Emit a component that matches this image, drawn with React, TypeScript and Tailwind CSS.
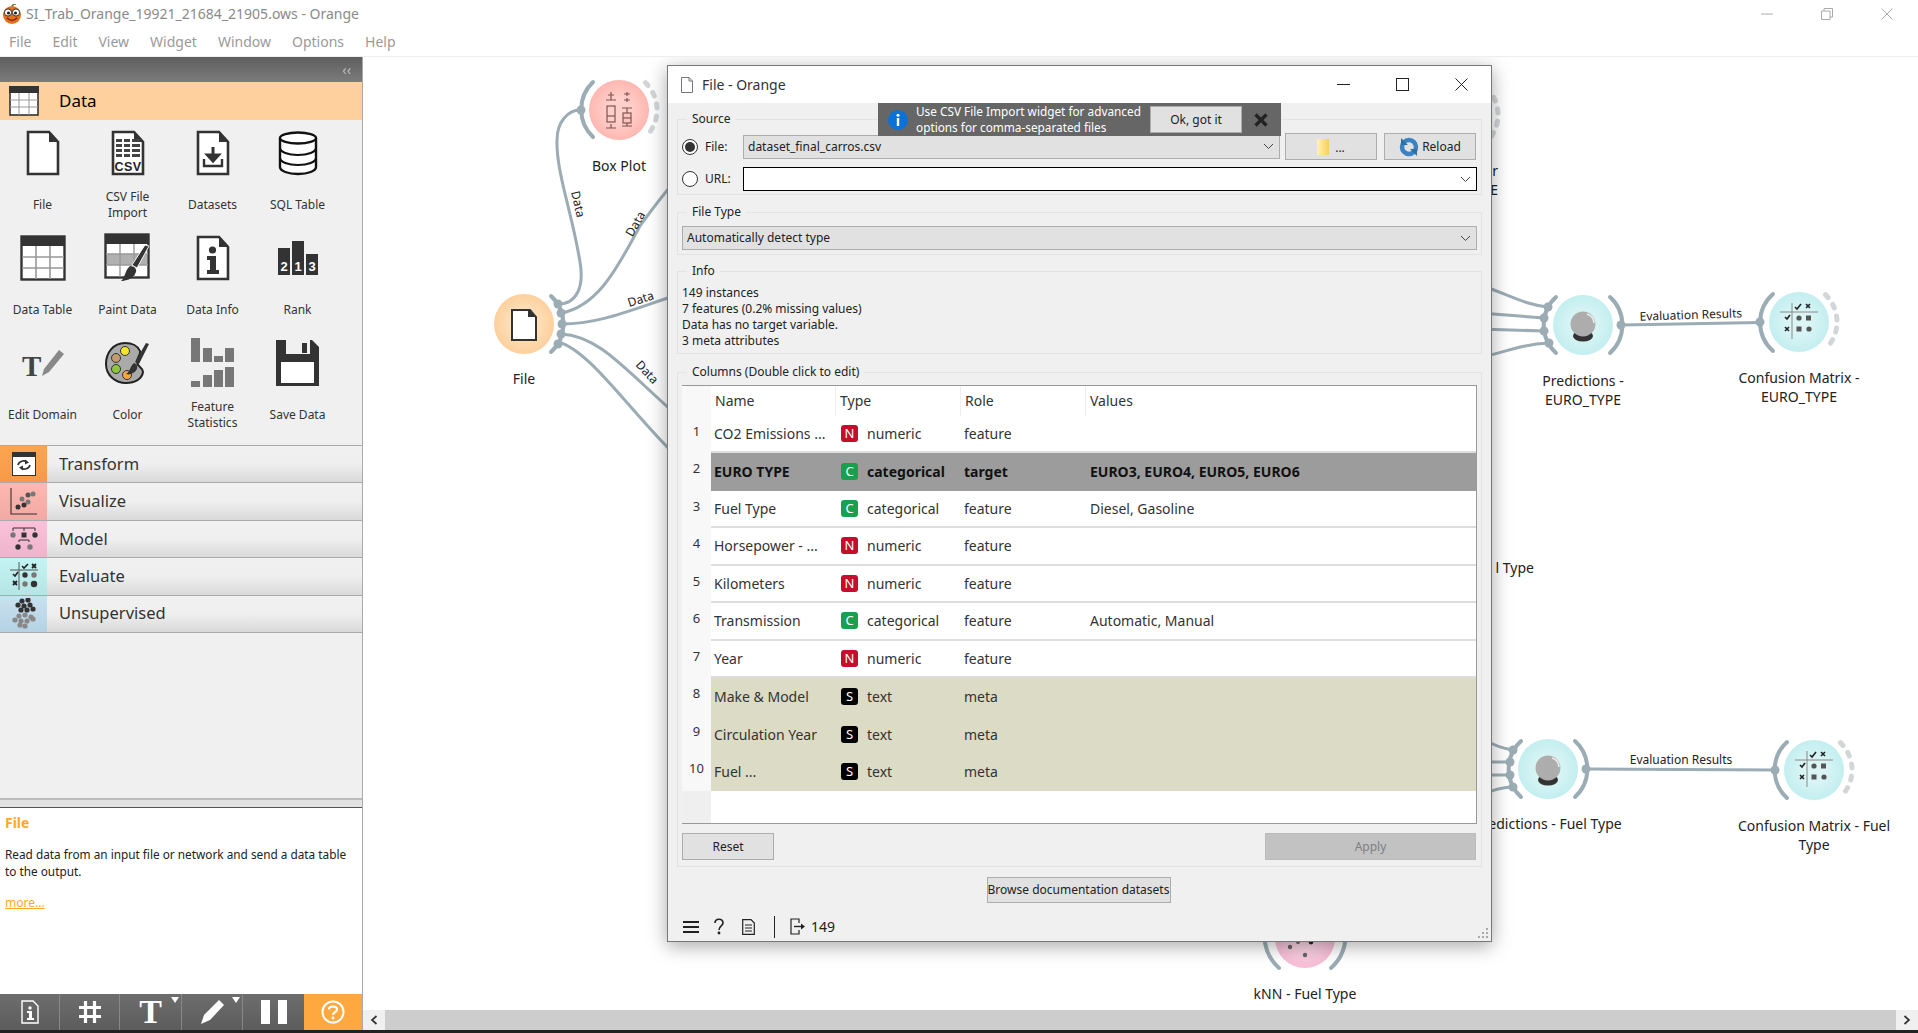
import React from "react";

const LINK = "#9bacb4";

function FileIcon() {
  return (
    <svg width="34" height="46" viewBox="0 0 34 46">
      <path d="M2 2H23L32 12V44H2Z" fill="#fff" stroke="#333" strokeWidth="2.6" />
      <path d="M23 2L32 12H23Z" fill="#333" />
    </svg>
  );
}
function CsvIcon() {
  return (
    <svg width="34" height="46" viewBox="0 0 34 46">
      <path d="M2 2H23L32 12V44H2Z" fill="#fff" stroke="#333" strokeWidth="2.6" />
      <path d="M23 2L32 12H23Z" fill="#333" />
      <g fill="#444">
        {[9, 14, 19, 24].map((y) => (
          <g key={y}>
            <rect x="5" y={y} width="6" height="3" />
            <rect x="13" y={y} width="6" height="3" />
            <rect x="21" y={y} width="8" height="3" />
          </g>
        ))}
      </g>
      <text x="17" y="41" textAnchor="middle" fontSize="12.5" fontWeight="700" fill="#222" fontFamily="Liberation Sans, sans-serif" letterSpacing="0.5">CSV</text>
    </svg>
  );
}
function DatasetsIcon() {
  return (
    <svg width="34" height="46" viewBox="0 0 34 46">
      <path d="M2 2H23L32 12V44H2Z" fill="#fff" stroke="#333" strokeWidth="2.6" />
      <path d="M23 2L32 12H23Z" fill="#333" />
      <path d="M17 17V29M11.5 25L17 31L22.5 25Z" stroke="#333" strokeWidth="3" fill="#333" />
      <path d="M8 29V36H26V29" stroke="#333" strokeWidth="2.4" fill="none" />
    </svg>
  );
}
function SqlIcon() {
  return (
    <svg width="40" height="46" viewBox="0 0 40 46">
      <path d="M2 8V37C2 41 10 44 20 44S38 41 38 37V8" fill="#fff" stroke="#111" strokeWidth="2.4" />
      <ellipse cx="20" cy="8" rx="18" ry="5.5" fill="#fff" stroke="#111" strokeWidth="2.4" />
      <path d="M2 18C2 22 10 25 20 25S38 22 38 18M2 28C2 32 10 35 20 35S38 32 38 28" fill="none" stroke="#111" strokeWidth="2.2" />
    </svg>
  );
}
function TableIcon() {
  return (
    <svg width="46" height="46" viewBox="0 0 46 46">
      <rect x="1.5" y="1.5" width="43" height="43" fill="#fff" stroke="#333" strokeWidth="2.4" />
      <rect x="1" y="1" width="44" height="10" fill="#333" />
      <path d="M16 11V44M30 11V44M2 22H44M2 33H44" stroke="#999" strokeWidth="1.6" />
    </svg>
  );
}
function PaintIcon() {
  return (
    <svg width="48" height="50" viewBox="0 0 48 50">
      <rect x="1.5" y="1.5" width="43" height="43" fill="#fff" stroke="#333" strokeWidth="2.4" />
      <rect x="1" y="1" width="44" height="10" fill="#333" />
      <rect x="3" y="21" width="40" height="11" fill="#b0b0b0" />
      <path d="M16 11V44M30 11V44M2 21H44M2 32H44" stroke="#999" strokeWidth="1.4" />
      <path d="M45 13L33 35L28 32L41 12Z" fill="#333" stroke="#f0f0f0" strokeWidth="1" />
      <path d="M26 33C31 33 34 37 31 41C28 46 22 48 17 48C21 45 21 37 26 33Z" fill="#333" />
    </svg>
  );
}
function InfoDocIcon() {
  return (
    <svg width="34" height="46" viewBox="0 0 34 46">
      <path d="M2 2H23L32 12V44H2Z" fill="#fff" stroke="#333" strokeWidth="2.6" />
      <path d="M23 2L32 12H23Z" fill="#333" />
      <circle cx="16.5" cy="15" r="3.6" fill="#333" />
      <path d="M11 21H20V35H23V39H11V35H14V25H11Z" fill="#333" />
    </svg>
  );
}
function RankIcon() {
  return (
    <svg width="42" height="34" viewBox="0 0 42 34">
      <rect x="1" y="7" width="12" height="27" fill="#333" />
      <rect x="15" y="0" width="12" height="34" fill="#333" />
      <rect x="29" y="13" width="12" height="21" fill="#333" />
      <g fill="#fff" fontSize="13" fontWeight="700" fontFamily="Liberation Sans, sans-serif" textAnchor="middle">
        <text x="7" y="30">2</text>
        <text x="21" y="30">1</text>
        <text x="35" y="30">3</text>
      </g>
    </svg>
  );
}
function EditDomainIcon() {
  return (
    <svg width="44" height="36" viewBox="0 0 44 36">
      <text x="1" y="31" fontSize="29" fontWeight="700" fill="#444" fontFamily="Liberation Serif, serif">T</text>
      <path d="M38 5L43 9L28 27L21 31L23 24Z" fill="#888" />
    </svg>
  );
}
function ColorIcon() {
  return (
    <svg width="46" height="44" viewBox="0 0 46 44">
      <path d="M20 2C8 2 1 12 1 23C1 35 11 42 21 42C30 42 37 38 38 31C38 26 32 26 32 21C32 16 36 14 35 10C33 5 27 2 20 2Z" fill="#aaa" stroke="#222" strokeWidth="2" />
      <circle cx="20" cy="10" r="4.5" fill="#f5e623" stroke="#333" />
      <circle cx="11" cy="17" r="4.5" fill="#c29a6b" stroke="#333" />
      <circle cx="11" cy="28" r="4.5" fill="#8cc63f" stroke="#333" />
      <circle cx="22" cy="34" r="4.5" fill="#f7a93f" stroke="#333" />
      <path d="M44 3L34 23L30 21L41 2Z" fill="#333" />
      <path d="M29 22C34 23 33 30 28 32C26 33 24 34 21 33C25 31 25 25 29 22Z" fill="#333" />
    </svg>
  );
}
function StatsIcon() {
  return (
    <svg width="44" height="50" viewBox="0 0 44 50" fill="#777">
      <rect x="0" y="0" width="9" height="24" />
      <rect x="12" y="10" width="9" height="14" />
      <rect x="23" y="18" width="9" height="6" />
      <rect x="34" y="10" width="9" height="14" />
      <rect x="0" y="43" width="9" height="6" />
      <rect x="12" y="37" width="9" height="12" />
      <rect x="23" y="32" width="9" height="17" />
      <rect x="34" y="29" width="9" height="20" />
    </svg>
  );
}
function SaveIcon() {
  return (
    <svg width="43" height="46" viewBox="0 0 43 46">
      <path d="M0 0H36L43 7V46H0Z" fill="#333" />
      <rect x="10" y="0" width="24" height="14" fill="#f0f0f0" />
      <rect x="26" y="3" width="5" height="10" fill="#333" />
      <rect x="5" y="22" width="33" height="21" fill="#fff" />
    </svg>
  );
}

const widgets: { label: string; lines?: string[]; icon: React.ReactNode }[] = [
  { label: "File", icon: <FileIcon /> },
  { label: "CSV File Import", lines: ["CSV File", "Import"], icon: <CsvIcon /> },
  { label: "Datasets", icon: <DatasetsIcon /> },
  { label: "SQL Table", icon: <SqlIcon /> },
  { label: "Data Table", icon: <TableIcon /> },
  { label: "Paint Data", icon: <PaintIcon /> },
  { label: "Data Info", icon: <InfoDocIcon /> },
  { label: "Rank", icon: <RankIcon /> },
  { label: "Edit Domain", icon: <EditDomainIcon /> },
  { label: "Color", icon: <ColorIcon /> },
  { label: "Feature Statistics", lines: ["Feature", "Statistics"], icon: <StatsIcon /> },
  { label: "Save Data", icon: <SaveIcon /> },
];

function TransformIcon() {
  return (
    <svg width="24" height="24" viewBox="0 0 24 24">
      <rect x="0.5" y="0.5" width="23" height="23" fill="#fff" stroke="#333" />
      <rect x="0" y="0" width="24" height="5" fill="#333" />
      <path d="M6 13C7 9 12 8 15 10M18 13C17 17 12 18 9 16" fill="none" stroke="#333" strokeWidth="1.7" />
      <path d="M13 7.5L17 10.5L13 12.5ZM11 13.5L7 15.5L11 18.5Z" fill="#333" />
    </svg>
  );
}
function VisualizeIcon() {
  return (
    <svg width="28" height="30" viewBox="0 0 28 30">
      <path d="M1 1V27H27" fill="none" stroke="#333" strokeWidth="1.1" />
      <g fill="#333">
        <circle cx="8" cy="20" r="2.5" />
        <circle cx="14" cy="18" r="2.5" />
      </g>
      <g fill="#777">
        <circle cx="12" cy="12" r="2.5" />
        <circle cx="18" cy="15" r="2.5" />
      </g>
      <circle cx="18" cy="8" r="2.5" fill="#555" />
      <circle cx="23" cy="7" r="2.5" fill="#777" />
    </svg>
  );
}
function ModelIcon() {
  return (
    <svg width="30" height="26" viewBox="0 0 30 26">
      <path d="M4 5V2H26V5M15 2V5M10 16V14H20V16" fill="none" stroke="#333" strokeWidth="1" />
      <circle cx="4" cy="9" r="2.7" fill="#777" />
      <rect x="12.5" y="6.5" width="5" height="5" fill="#333" />
      <circle cx="26" cy="9" r="2.7" fill="#333" />
      <circle cx="9" cy="21" r="2.7" fill="#333" />
      <circle cx="21" cy="21" r="2.7" fill="#777" />
    </svg>
  );
}
function EvaluateIcon({ size = 28 }: { size?: number }) {
  return (
    <svg width={size} height={size} viewBox="0 0 28 28">
      <path d="M0 8H28M9 0V28" stroke="#555" strokeWidth="1" fill="none" />
      <path d="M12 4L14 6L18 2M3 12L5 14L8 10" stroke="#222" strokeWidth="1.6" fill="none" />
      <path d="M22 2L26 6M26 2L22 6M3 19L7 23M7 19L3 23" stroke="#222" strokeWidth="1.8" fill="none" />
      <circle cx="15" cy="13" r="2.7" fill="#333" />
      <circle cx="24" cy="13" r="2.7" fill="#777" />
      <circle cx="15" cy="22" r="2.7" fill="#777" />
      <circle cx="24" cy="22" r="3.2" fill="#333" />
    </svg>
  );
}
function UnsupervisedIcon() {
  const dark = [[11, 3], [17, 2], [7, 7], [13, 8], [19, 7], [10, 12], [16, 12], [22, 11]];
  const grey = [[8, 18], [14, 17], [20, 19], [4, 22], [10, 23], [16, 23], [22, 21], [9, 27], [14, 28]];
  return (
    <svg width="26" height="31" viewBox="0 0 26 31">
      {dark.map(([x, y], i) => <circle key={i} cx={x} cy={y} r="2.6" fill="#333" />)}
      {grey.map(([x, y], i) => <circle key={i} cx={x} cy={y} r="2.6" fill="#888" />)}
    </svg>
  );
}

const categories = [
  { name: "Transform", bg: "bg-gradient-to-b from-[#fba452] to-[#f79a48]", icon: <TransformIcon /> },
  { name: "Visualize", bg: "bg-gradient-to-b from-[#ffb7b1] to-[#f0a9a3]", icon: <VisualizeIcon /> },
  { name: "Model", bg: "bg-gradient-to-b from-[#fac1d9] to-[#efb4cc]", icon: <ModelIcon /> },
  { name: "Evaluate", bg: "bg-gradient-to-b from-[#c3f3f3] to-[#b6e5e5]", icon: <EvaluateIcon /> },
  { name: "Unsupervised", bg: "bg-gradient-to-b from-[#cae1ef] to-[#b4d2e4]", icon: <UnsupervisedIcon /> },
];

function Sidebar() {
  return (
    <aside className="w-[363px] shrink-0 flex flex-col bg-[#f0f0f0] border-r border-[#aaaaaa]">
      <div className="h-[25px] shrink-0 flex items-center justify-end pr-[11px] bg-gradient-to-b from-[#5e5e5e] to-[#7c7c7c] text-[#bbbbbb] text-[14px] leading-none">
        ‹‹
      </div>
      <div className="h-[38px] shrink-0 flex items-center bg-[#fdd09d]">
        <div className="w-[59px] flex justify-start pl-[9px]">
          <svg width="30" height="30" viewBox="0 0 30 30">
            <rect x="1" y="1" width="28" height="28" fill="#fff" stroke="#333" strokeWidth="1.6" />
            <rect x="0" y="0" width="30" height="7" fill="#333" />
            <path d="M10 7V29M20 7V29M1 14H29M1 21H29" stroke="#999" strokeWidth="1" />
          </svg>
        </div>
        <span className="text-[17px] text-black">Data</span>
      </div>
      <div className="h-[325px] shrink-0 grid grid-cols-[85px_85px_85px_85px] grid-rows-[105px_105px_105px] pt-[5px]">
        {widgets.map((w) => (
          <div key={w.label} className="flex flex-col items-center">
            <div className="h-[56px] flex items-center justify-center">{w.icon}</div>
            <div className="mt-[1px] h-[46px] flex flex-col items-center justify-center text-[12px] leading-[16px] text-[#333333]">
              {(w.lines ?? [w.label]).map((l) => <span key={l}>{l}</span>)}
            </div>
          </div>
        ))}
      </div>
      <div className="shrink-0 border-t border-[#aaaaaa]">
        {categories.map((c) => (
          <div key={c.name} className="h-[37.4px] flex border-b border-[#aaaaaa] bg-gradient-to-b from-[#f1f1f1] via-[#efefef] to-[#d9d9d9]">
            <div className={`w-[47px] flex items-center justify-center ${c.bg}`}>{c.icon}</div>
            <span className="pl-[12px] self-center text-[16.5px] text-[#333333]">{c.name}</span>
          </div>
        ))}
      </div>
      <div className="flex-1" />
      <div className="h-[10px] shrink-0 border-t-2 border-[#bbbbbb] bg-[#e2e2e2] border-b border-b-[#555555]" />
      <div className="h-[186px] shrink-0 bg-white px-[5px] pt-[4px]">
        <div className="text-[14px] leading-[22px] font-bold text-[#ffa826]">File</div>
        <p className="mt-[12px] text-[11.8px] leading-[17px] text-[#222222] whitespace-nowrap">
          Read data from an input file or network and send a data table<br />to the output.
        </p>
        <div className="mt-[14px] text-[12px] leading-[17px] text-[#ffa826] underline">more...</div>
      </div>
      <div className="h-[36px] shrink-0 flex bg-gradient-to-b from-[#6e6e6e] to-[#5c5c5c]">
        <div className="w-[60px] flex items-center justify-center border-r border-[#888888]">
          <svg width="18" height="24" viewBox="0 0 18 24">
            <path d="M1 1H12L17 6V23H1Z" fill="none" stroke="#fff" strokeWidth="1.4" />
            <circle cx="9" cy="8" r="1.7" fill="#fff" />
            <path d="M6 11H11V18H13V20H6V18H8V13H6Z" fill="#fff" />
          </svg>
        </div>
        <div className="w-[60px] flex items-center justify-center border-r border-[#888888]">
          <svg width="24" height="24" viewBox="0 0 24 24">
            <path d="M7.5 1V23M16.5 1V23M1 7.5H23M1 16.5H23" stroke="#fff" strokeWidth="3.2" />
          </svg>
        </div>
        <div className="w-[62px] relative flex items-center justify-center border-r border-[#888888]">
          <span className="text-[34px] leading-none font-bold text-white font-['Liberation_Serif',serif]">T</span>
          <span className="absolute right-[2px] top-[3px] w-0 h-0 border-x-[4px] border-x-transparent border-t-[6px] border-t-white" />
        </div>
        <div className="w-[61px] relative flex items-center justify-center border-r border-[#888888]">
          <svg width="24" height="26" viewBox="0 0 24 26">
            <path d="M19 1L24 6L10 21L1 25L4 16Z" fill="#fff" />
          </svg>
          <span className="absolute right-[2px] top-[3px] w-0 h-0 border-x-[4px] border-x-transparent border-t-[6px] border-t-white" />
        </div>
        <div className="w-[61px] flex items-center justify-center gap-[8px]">
          <span className="w-[9px] h-[24px] bg-white" />
          <span className="w-[9px] h-[24px] bg-white" />
        </div>
        <div className="flex-1 flex items-center justify-center bg-[#ffa840]">
          <svg width="24" height="24" viewBox="0 0 24 24">
            <circle cx="12" cy="12" r="10.5" fill="none" stroke="#fff" strokeWidth="2" />
            <path d="M8 9.5C8 5.5 16 5.5 16 9.5C16 12 12 12 12 15" fill="none" stroke="#fff" strokeWidth="2.2" />
            <circle cx="12" cy="18" r="1.4" fill="#fff" />
          </svg>
        </div>
      </div>
    </aside>
  );
}

function Arc({ d }: { d: string }) {
  return <path d={d} fill="none" stroke={LINK} strokeWidth="4" strokeLinecap="round" />;
}
function Dot({ x, y, r = 4.5 }: { x: number; y: number; r?: number }) {
  return <circle cx={x} cy={y} r={r} fill={LINK} />;
}
function DashedOut({ cx, cy }: { cx: number; cy: number }) {
  const a = (46 * Math.PI) / 180;
  const r = 38;
  const dx = r * Math.cos(a);
  const dy = r * Math.sin(a);
  return (
    <path
      d={`M${cx + dx} ${cy - dy}A${r} ${r} 0 0 1 ${cx + dx} ${cy + dy}`}
      fill="none"
      stroke="#d3d6d8"
      strokeWidth="5"
      strokeLinecap="round"
      strokeDasharray="4 8.2"
    />
  );
}
function CrystalBall({ cx, cy }: { cx: number; cy: number }) {
  return (
    <g>
      <ellipse cx={cx} cy={cy + 11} rx="10" ry="5.5" fill="#333" />
      <circle cx={cx} cy={cy - 1} r="12.5" fill="#adadad" />
      <path d={`M${cx + 4} ${cy - 11}A10 10 0 0 1 ${cx + 11} ${cy - 2}`} fill="none" stroke="#eee" strokeWidth="1.5" />
    </g>
  );
}
function MatrixGlyph({ cx, cy }: { cx: number; cy: number }) {
  return (
    <g transform={`translate(${cx - 19} ${cy - 19})`}>
      <path d="M0 9H38M12 0V36" stroke="#888" strokeWidth="1" fill="none" />
      <path d="M15 4L17 6L21 1M5 14L7 16L10 12" stroke="#222" strokeWidth="1.6" fill="none" />
      <path d="M26 1L30 5M30 1L26 5M5 24L9 28M9 24L5 28" stroke="#222" strokeWidth="1.6" fill="none" />
      <circle cx="19" cy="15" r="2.6" fill="#555" />
      <rect x="26" y="12.5" width="5" height="5" fill="#555" />
      <rect x="16.5" y="23.5" width="5" height="5" fill="#555" />
      <circle cx="29" cy="26" r="2.6" fill="#555" />
    </g>
  );
}

function CanvasDrawing() {
  return (
    <svg className="absolute left-0 top-0" width="1555" height="953" viewBox="363 57 1555 953">
      <defs>
        <radialGradient id="gOrange"><stop offset="35%" stopColor="#ffe2bf" /><stop offset="100%" stopColor="#fdd09d" /></radialGradient>
        <radialGradient id="gRed"><stop offset="35%" stopColor="#ffd0cb" /><stop offset="100%" stopColor="#ffb7b1" /></radialGradient>
        <radialGradient id="gPink"><stop offset="35%" stopColor="#fbd4e4" /><stop offset="100%" stopColor="#f8bdd6" /></radialGradient>
        <radialGradient id="gTeal"><stop offset="35%" stopColor="#dbf5f5" /><stop offset="100%" stopColor="#c3eef0" /></radialGradient>
      </defs>
      <g fill="none" stroke={LINK} strokeWidth="3">
        <path d="M558 304C578 304 584 285 580 262C572 212 556 172 557 140C557 122 568 110 580 110" />
        <path d="M561 313C600 306 620 262 640 226C650 212 660 198 680 175" />
        <path d="M562 324C600 324 630 310 680 294" />
        <path d="M561 334C600 336 625 370 680 418" />
        <path d="M558 342C590 350 630 412 680 460" />
        <path d="M1480 285C1510 295 1525 305 1548 307" />
        <path d="M1480 313L1544 318" />
        <path d="M1480 329L1544 331" />
        <path d="M1480 358C1510 350 1525 344 1549 343" />
        <path d="M1622 325L1760 322.5" />
        <path d="M1480 738C1495 746 1505 749 1513 750" />
        <path d="M1480 762L1510 762" />
        <path d="M1480 775L1510 775" />
        <path d="M1480 795C1495 789 1505 787 1513 787" />
        <path d="M1587 769L1775 770" />
      </g>

      <circle cx="524" cy="324" r="30" fill="url(#gOrange)" />
      <path d="M513 310H531L537 317V340H513Z" transform="translate(-1 0)" fill="#fff" stroke="#333" strokeWidth="2" />
      <path d="M529 309L537 317H529Z" transform="translate(-1 0)" fill="#333" />
      <Arc d="M551 296A38 38 0 0 1 551 352" />
      <Dot x={558} y={304} /><Dot x={561} y={313} /><Dot x={562} y={324} /><Dot x={561} y={334} /><Dot x={558} y={344} />

      <circle cx="619" cy="110" r="30" fill="url(#gRed)" />
      <g stroke="#7f5550" strokeWidth="1.2" fill="none">
        <path d="M611 92V100M608 95H614M606 100H616M606 128H616M611 124V128" />
        <rect x="607" y="106" width="8" height="16" />
        <path d="M607 116H615" />
        <path d="M627 92V96M624 94H630M627 98V102M624 100H630M622 108H632M622 126H632M627 108V126" />
        <rect x="623" y="113" width="8" height="10" fill="#ffc4bf" />
        <path d="M623 118H631" />
      </g>
      <Arc d="M593 82A38 38 0 0 0 593 137" />
      <Dot x={581} y={110} />
      <DashedOut cx={619} cy={110} />

      <DashedOut cx={1460} cy={115} />

      <circle cx="1305" cy="938" r="30" fill="url(#gPink)" />
      <g fill="#666"><circle cx="1290" cy="947" r="2.2" /><circle cx="1305" cy="955" r="2.2" /><circle cx="1298" cy="942" r="2" /></g>
      <circle cx="1311" cy="942" r="2.4" fill="#222" />
      <Arc d="M1279 968A42 42 0 0 1 1265 930" />
      <Arc d="M1331 968A42 42 0 0 0 1345 930" />

      <circle cx="1583" cy="325" r="30" fill="url(#gTeal)" />
      <CrystalBall cx={1583} cy={325} />
      <Arc d="M1556 297A38 38 0 0 0 1556 353" />
      <Arc d="M1610 297A38 38 0 0 1 1610 353" />
      <Dot x={1548} y={307} /><Dot x={1544} y={318} /><Dot x={1544} y={331} /><Dot x={1549} y={343} /><Dot x={1621} y={325} />

      <circle cx="1799" cy="322" r="30" fill="url(#gTeal)" />
      <MatrixGlyph cx={1799} cy={322} />
      <Arc d="M1773 294A38 38 0 0 0 1773 351" />
      <Dot x={1760} y={322} />
      <DashedOut cx={1799} cy={322} />

      <circle cx="1548" cy="769" r="30" fill="url(#gTeal)" />
      <CrystalBall cx={1548} cy={769} />
      <Arc d="M1521 741A38 38 0 0 0 1521 797" />
      <Arc d="M1575 741A38 38 0 0 1 1575 797" />
      <Dot x={1513} y={750} /><Dot x={1510} y={762} /><Dot x={1510} y={775} /><Dot x={1513} y={787} /><Dot x={1586} y={769} />

      <circle cx="1814" cy="770" r="30" fill="url(#gTeal)" />
      <MatrixGlyph cx={1814} cy={770} />
      <Arc d="M1787 742A38 38 0 0 0 1787 798" />
      <Dot x={1775} y={770} />
      <DashedOut cx={1814} cy={770} />

      <g fontSize="12" fill="#222" textAnchor="middle" fontFamily="Noto Sans, sans-serif">
        <text transform="translate(574 205) rotate(77)">Data</text>
        <text transform="translate(639 226) rotate(-60)">Data</text>
        <text transform="translate(642 303) rotate(-18)">Data</text>
        <text transform="translate(644 375) rotate(47)">Data</text>
        <text transform="translate(1691 319) rotate(-2)">Evaluation Results</text>
        <text x="1681" y="764">Evaluation Results</text>
      </g>
    </svg>
  );
}

function NodeLabels() {
  return (
    <div className="text-[14px] leading-[19px] text-[#222222] text-center">
      <div className="absolute left-[111px] top-[312px] w-[100px]">File</div>
      <div className="absolute left-[206px] top-[99px] w-[100px]">Box Plot</div>
      <div className="absolute left-[1100px] top-[104px] w-[35px] text-right whitespace-nowrap">er<br />E</div>
      <div className="absolute left-[1100px] top-[501px] w-[71px] text-right whitespace-nowrap">l Type</div>
      <div className="absolute left-[1150px] top-[314px] w-[140px]">Predictions -<br />EURO_TYPE</div>
      <div className="absolute left-[1366px] top-[311px] w-[140px]">Confusion Matrix -<br />EURO_TYPE</div>
      <div className="absolute left-[1065px] top-[757px] w-[240px]">Predictions - Fuel Type</div>
      <div className="absolute left-[1371px] top-[759px] w-[160px]">Confusion Matrix - Fuel<br />Type</div>
      <div className="absolute left-[842px] top-[927px] w-[200px]">kNN - Fuel Type</div>
    </div>
  );
}

function Chevron() {
  return (
    <svg width="11" height="7" viewBox="0 0 11 7">
      <path d="M1 1L5.5 5.5L10 1" fill="none" stroke="#444" strokeWidth="1" />
    </svg>
  );
}

function Group({ title, className, children }: { title: string; className?: string; children?: React.ReactNode }) {
  return (
    <div className={`relative border border-[#e3e3e3] px-[4px] ${className ?? ""}`}>
      <span className="absolute left-[9px] -top-[9px] px-[5px] bg-[#f0f0f0] text-[12px] leading-[16px] text-[#222222]">{title}</span>
      {children}
    </div>
  );
}

function Radio({ on, label }: { on?: boolean; label: string }) {
  return (
    <div className="w-[61px] flex items-center gap-[7px] shrink-0">
      <span className="w-[16px] h-[16px] rounded-full border border-[#333333] bg-white flex items-center justify-center">
        {on && <span className="w-[10px] h-[10px] rounded-full bg-[#333333]" />}
      </span>
      <span className="text-[12px] text-[#222222]">{label}</span>
    </div>
  );
}

const btn = "border border-[#adadad] bg-[#e1e1e1] flex items-center justify-center text-[12px] text-[#222222]";

const columns: { n: number; name: string; type: "N" | "C" | "S"; t: string; role: string; values?: string; kind?: "target" | "meta" }[] = [
  { n: 1, name: "CO2 Emissions ...", type: "N", t: "numeric", role: "feature" },
  { n: 2, name: "EURO TYPE", type: "C", t: "categorical", role: "target", values: "EURO3, EURO4, EURO5, EURO6", kind: "target" },
  { n: 3, name: "Fuel Type", type: "C", t: "categorical", role: "feature", values: "Diesel, Gasoline" },
  { n: 4, name: "Horsepower - ...", type: "N", t: "numeric", role: "feature" },
  { n: 5, name: "Kilometers", type: "N", t: "numeric", role: "feature" },
  { n: 6, name: "Transmission", type: "C", t: "categorical", role: "feature", values: "Automatic, Manual" },
  { n: 7, name: "Year", type: "N", t: "numeric", role: "feature" },
  { n: 8, name: "Make & Model", type: "S", t: "text", role: "meta", kind: "meta" },
  { n: 9, name: "Circulation Year", type: "S", t: "text", role: "meta", kind: "meta" },
  { n: 10, name: "Fuel ...", type: "S", t: "text", role: "meta", kind: "meta" },
];

const badgeBg = { N: "bg-[#c90b2e]", C: "bg-[#1c9e4f]", S: "bg-black" };

function ColumnsTable() {
  return (
    <div className="h-[439px] border border-[#999999] border-l-0 border-t-[#999999] bg-white flex flex-col text-[14px] text-[#333333]">
      <div className="h-[29.5px] shrink-0 flex">
        <div className="w-[29px] bg-[#f8f8f8]" />
        {["Name", "Type", "Role"].map((h) => (
          <div key={h} className="w-[125px] pl-[4px] flex items-center border-r border-[#eeeeee]">{h}</div>
        ))}
        <div className="flex-1 pl-[4px] flex items-center">Values</div>
      </div>
      {columns.map((c) => {
        const target = c.kind === "target";
        const meta = c.kind === "meta";
        const rowBg = target ? "bg-[#9c9c9c] font-bold text-[#111111]" : meta ? "bg-[#dcdbc5]" : "border-b-2 border-[#dddddd]";
        return (
          <div key={c.n} className="h-[37.5px] shrink-0 flex">
            <div className="w-[29px] shrink-0 bg-[#f8f8f8] text-center pt-[5px] text-[13px] leading-[20px] font-normal text-[#333333]">{c.n}</div>
            <div className={`flex-1 flex items-center ${rowBg}`}>
              <div className="w-[125px] pl-[3px] whitespace-nowrap">{c.name}</div>
              <div className="w-[125px] pl-[5px] flex items-center gap-[9px]">
                <span className={`w-[17px] h-[17px] rounded-[3px] flex items-center justify-center text-[13px] font-normal text-white ${badgeBg[c.type]}`}>{c.type}</span>
                <span>{c.t}</span>
              </div>
              <div className="w-[125px] pl-[3px]">{c.role}</div>
              <div className="flex-1 pl-[4px]">{c.values}</div>
            </div>
          </div>
        );
      })}
      <div className="flex-1 flex">
        <div className="w-[29px] bg-[#efefef]" />
      </div>
    </div>
  );
}

function Dialog() {
  return (
    <div className="absolute left-[304px] top-[8px] w-[825px] h-[877px] flex flex-col bg-[#f0f0f0] border border-[#777777] shadow-[0_4px_18px_rgba(0,0,0,0.35)]">
      <div className="h-[37px] shrink-0 bg-white flex items-center pl-[13px]">
        <svg width="12" height="16" viewBox="0 0 12 16">
          <path d="M0.5 0.5H8L11.5 4V15.5H0.5Z" fill="#fff" stroke="#777" />
          <path d="M8 0.5V4H11.5" fill="none" stroke="#777" />
        </svg>
        <span className="ml-[9px] text-[14px] text-[#333333]">File - Orange</span>
        <div className="ml-auto flex items-center pr-[23px] gap-[46px]">
          <svg width="13" height="13" viewBox="0 0 13 13"><path d="M0 6.5H13" stroke="#222" strokeWidth="1" /></svg>
          <svg width="13" height="13" viewBox="0 0 13 13"><rect x="0.5" y="0.5" width="12" height="12" fill="none" stroke="#222" /></svg>
          <svg width="13" height="13" viewBox="0 0 13 13"><path d="M0.5 0.5L12.5 12.5M12.5 0.5L0.5 12.5" stroke="#222" strokeWidth="1" /></svg>
        </div>
      </div>

      <div className="absolute left-[210px] top-[37px] w-[403px] h-[33px] bg-[#666666] flex items-center z-10">
        <svg className="ml-[10px]" width="20" height="20" viewBox="0 0 20 20">
          <circle cx="10" cy="10" r="10" fill="#0a72d6" />
          <circle cx="10" cy="5.2" r="1.5" fill="#fff" />
          <rect x="8.8" y="8" width="2.4" height="8" fill="#fff" />
        </svg>
        <div className="ml-[8px] w-[232px] pb-[2px] text-[11.8px] leading-[16px] text-white whitespace-nowrap">
          Use CSV File Import widget for advanced<br />options for comma-separated files
        </div>
        <div className={`${btn} w-[92px] h-[27px] ml-[2px]`}>Ok, got it</div>
        <svg className="ml-[12px]" width="14" height="14" viewBox="0 0 14 14">
          <path d="M1.5 1.5L12.5 12.5M12.5 1.5L1.5 12.5" stroke="#222" strokeWidth="3.2" />
        </svg>
      </div>

      <div className="flex-1 flex flex-col px-[9px] pt-[16px]">
        <Group title="Source" className="h-[76px] pt-[13px]">
          <div className="flex items-center h-[27px] pr-0">
            <Radio on label="File:" />
            <div className="w-[537px] h-[24px] border border-[#adadad] bg-[#e1e1e1] flex items-center justify-between pl-[4px] pr-[5px] text-[12px] text-[#222222]">
              dataset_final_carros.csv <Chevron />
            </div>
            <div className={`${btn} ml-[5px] w-[92px] h-[27px] gap-[6px]`}>
              <span className="w-[12px] h-[16px] bg-gradient-to-r from-[#fff3b0] to-[#f6cf5a]" />
              <span className="mt-[3px]">...</span>
            </div>
            <div className={`${btn} ml-[7px] w-[92px] h-[27px] gap-[3px]`}>
              <svg width="20" height="20" viewBox="0 0 20 20">
                <circle cx="10" cy="10" r="7" fill="none" stroke="#3b82c4" strokeWidth="4.5" />
                <path d="M2 1V8H9ZM18 19V12H11Z" fill="#2f6fa8" />
              </svg>
              Reload
            </div>
          </div>
          <div className="flex items-center mt-[7px]">
            <Radio label="URL:" />
            <div className="flex-1 h-[24px] border border-black bg-white flex items-center justify-end pr-[5px]"><Chevron /></div>
          </div>
        </Group>

        <Group title="File Type" className="h-[43px] mt-[17px] pt-[13px]">
          <div className="h-[24px] border border-[#adadad] bg-[#e1e1e1] flex items-center justify-between pl-[4px] pr-[5px] text-[12px] text-[#222222]">
            Automatically detect type <Chevron />
          </div>
        </Group>

        <Group title="Info" className="h-[83px] mt-[16px] pt-[13px] text-[12px] leading-[16px] text-[#222222]">
          <div>149 instances</div>
          <div>7 features (0.2% missing values)</div>
          <div>Data has no target variable.</div>
          <div>3 meta attributes</div>
        </Group>

        <Group title="Columns (Double click to edit)" className="h-[495px] mt-[18px] pt-[12px]">
          <ColumnsTable />
          <div className="mt-[9px] flex justify-between pr-[1px]">
            <div className={`${btn} w-[92px] h-[27px]`}>Reset</div>
            <div className="w-[211px] h-[27px] bg-[#c2c2c2] border border-[#bbbbbb] flex items-center justify-center text-[12px] text-[#7f7f7f]">Apply</div>
          </div>
        </Group>

        <div className="mt-[10px] flex justify-center">
          <div className={`${btn} w-[184px] h-[26px] text-[11.6px] -translate-x-[1px]`}>Browse documentation datasets</div>
        </div>
      </div>

      <div className="h-[26px] shrink-0 flex items-center pl-[15px] pb-[3px] relative text-[14px] text-[#222222]">
        <svg width="17" height="14" viewBox="0 0 17 14"><path d="M0 2H16M0 7H16M0 12H16" stroke="#222" strokeWidth="2.2" /></svg>
        <svg className="ml-[14px]" width="10" height="17" viewBox="0 0 10 17">
          <path d="M1 5C1 0 9 0 9 5C9 8 5 8 5 12" fill="none" stroke="#222" strokeWidth="1.6" />
          <circle cx="5" cy="15" r="1.4" fill="#222" />
        </svg>
        <svg className="ml-[18px]" width="13" height="16" viewBox="0 0 13 16">
          <path d="M0.7 0.7H9L12.3 4V15.3H0.7Z" fill="none" stroke="#222" strokeWidth="1.2" />
          <path d="M3 6H10M3 9H10M3 12H10" stroke="#222" />
        </svg>
        <span className="ml-[19px] w-px h-[22px] bg-[#222222]" />
        <svg className="ml-[15px]" width="16" height="17" viewBox="0 0 16 17">
          <path d="M9 5V1H1V16H9V12" fill="none" stroke="#222" strokeWidth="1.2" />
          <path d="M4 8.5H11" stroke="#222" strokeWidth="1.4" />
          <path d="M11 5.5L15 8.5L11 11.5Z" fill="#222" />
        </svg>
        <span className="ml-[5px]">149</span>
        <svg className="absolute right-[2px] bottom-[2px]" width="12" height="12" viewBox="0 0 12 12" fill="#aaa">
          <rect x="9" y="1" width="2" height="2" /><rect x="5" y="5" width="2" height="2" /><rect x="9" y="5" width="2" height="2" />
          <rect x="1" y="9" width="2" height="2" /><rect x="5" y="9" width="2" height="2" /><rect x="9" y="9" width="2" height="2" />
        </svg>
      </div>
    </div>
  );
}

export default function App() {
  return (
    <div className="w-screen h-screen overflow-hidden flex flex-col bg-white font-['Noto_Sans','Liberation_Sans',sans-serif]">
      <div className="h-[27px] shrink-0 flex items-center pl-[1px]">
        <svg width="22" height="20" viewBox="0 0 22 20">
          <circle cx="11" cy="11" r="9" fill="#e2701c" />
          <path d="M11 2L13 0H15" stroke="#5a7a1e" strokeWidth="1.5" fill="none" />
          <circle cx="7" cy="8.5" r="3.6" fill="#fff" stroke="#333" />
          <circle cx="15" cy="8.5" r="3.6" fill="#fff" stroke="#333" />
          <circle cx="7.5" cy="9" r="1.6" fill="#222" />
          <circle cx="14.5" cy="9" r="1.6" fill="#222" />
          <path d="M6 14C9 17 13 17 16 14" stroke="#7a1e10" strokeWidth="1.6" fill="none" />
        </svg>
        <span className="ml-[3px] text-[14px] text-[#8a8a8a]">SI_Trab_Orange_19921_21684_21905.ows - Orange</span>
        <div className="ml-auto flex items-center gap-[48px] pr-[25px]">
          <svg width="12" height="12" viewBox="0 0 12 12"><path d="M0 6H12" stroke="#aaa" /></svg>
          <svg width="12" height="12" viewBox="0 0 12 12"><path d="M0.5 3H9V11.5H0.5ZM3 3V0.5H11.5V9H9" fill="none" stroke="#aaa" /></svg>
          <svg width="12" height="12" viewBox="0 0 12 12"><path d="M0.5 0.5L11.5 11.5M11.5 0.5L0.5 11.5" stroke="#aaa" /></svg>
        </div>
      </div>
      <div className="h-[30px] shrink-0 flex items-center pl-[9px] gap-[21px] text-[14px] text-[#9a9a9a] border-b border-[#eeeeee]">
        {["File", "Edit", "View", "Widget", "Window", "Options", "Help"].map((m) => <span key={m}>{m}</span>)}
      </div>
      <div className="flex-1 min-h-0 flex">
        <Sidebar />
        <div className="flex-1 min-w-0 flex flex-col">
          <div className="flex-1 relative overflow-hidden">
            <CanvasDrawing />
            <NodeLabels />
            <Dialog />
          </div>
          <div className="h-[20px] shrink-0 flex bg-[#cdcdcd]">
            <div className="w-[22px] bg-[#f0f0f0] flex items-center justify-center text-[#333333]">
              <svg width="8" height="10" viewBox="0 0 8 10"><path d="M6.5 1L2 5L6.5 9" fill="none" stroke="#333" strokeWidth="1.7" /></svg>
            </div>
            <div className="flex-1" />
            <div className="w-[22px] bg-[#f0f0f0] flex items-center justify-center">
              <svg width="8" height="10" viewBox="0 0 8 10"><path d="M1.5 1L6 5L1.5 9" fill="none" stroke="#333" strokeWidth="1.7" /></svg>
            </div>
          </div>
        </div>
      </div>
      <div className="h-[3px] shrink-0 bg-[#222222]" />
    </div>
  );
}
